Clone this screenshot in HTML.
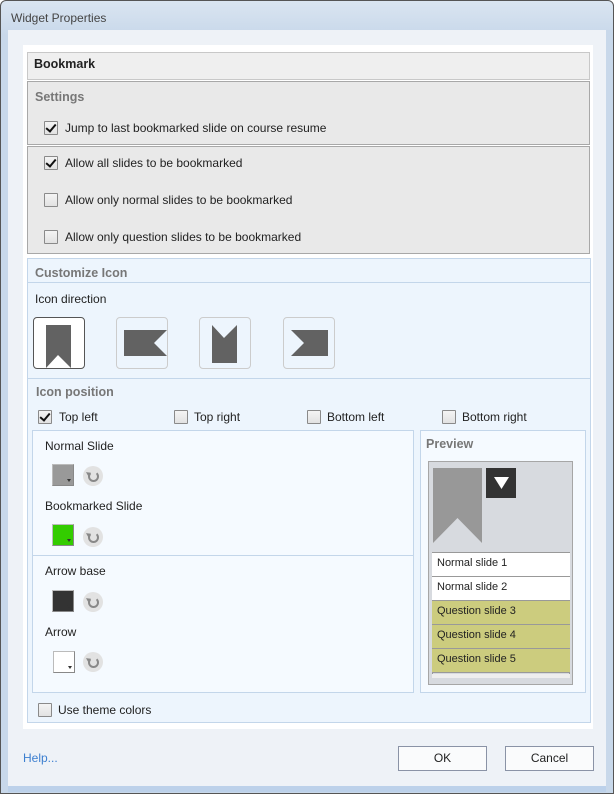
<!DOCTYPE html>
<html><head><style>
*{margin:0;padding:0;box-sizing:border-box}
body{width:614px;height:794px;position:relative;overflow:hidden;background:#fff;font-family:"Liberation Sans",sans-serif;font-size:12px;color:#222}
.a{position:absolute}
.cb{position:absolute;width:14px;height:14px;border:1px solid #8a8a8a;background:linear-gradient(#f4f4f4,#e2e2e2);border-radius:1px}
.cb.c::after{content:"";position:absolute;left:3px;top:0px;width:4px;height:8px;border:solid #111;border-width:0 2px 2px 0;transform:rotate(40deg)}
.t{position:absolute;white-space:nowrap}
.h{font-weight:bold;color:#777;font-size:12.5px}
.icb{position:absolute;width:52px;height:52px;border:1px solid #ccc;border-radius:4px;background:#edf5fd}
.sw{position:absolute;width:22px;height:22px;border:1px solid #bbb;border-right-color:#888;border-bottom-color:#888}
.sw::after{content:"";position:absolute;right:2px;bottom:1px;border:2px solid transparent;border-top:3px solid #333}
.rs{position:absolute;width:20px;height:20px;border-radius:50%;background:#e2e2e2}
.rs::before{content:"";position:absolute;left:5px;top:5px;width:7px;height:7px;border:2px solid #888;border-radius:50%;border-top-color:transparent}
.rs::after{content:"";position:absolute;left:4px;top:4px;border:3px solid transparent;border-left:4px solid #888;transform:rotate(-30deg)}
.pr{position:absolute;left:432px;width:138px;height:24px;border-bottom:1px solid #999;padding:4px 0 0 5px;font-size:11px}
.btn{position:absolute;width:89px;height:25px;border:1px solid #8a93a6;background:#fafbfc;text-align:center;line-height:23px}
</style></head><body>
<div class="a" style="left:0;top:0;width:614px;height:794px;border:1px solid #555;border-radius:6px 6px 0 0;background:linear-gradient(#dae5f1,#c8d8ea 35px)"></div>
<div class="t" style="left:11px;top:11px;color:#444">Widget Properties</div>
<div class="a" style="left:8px;top:30px;width:598px;height:758px;background:#eef2f7"></div>
<div class="a" style="left:606px;top:30px;width:6px;height:762px;background:#c8d8ea"></div>
<div class="a" style="left:8px;top:786px;width:598px;height:6px;background:#bcd1ea"></div>
<div class="a" style="left:23px;top:45px;width:570px;height:684px;background:#fff"></div>
<div class="a" style="left:27px;top:52px;width:563px;height:28px;background:#efefef;border:1px solid #c8c8c8"></div>
<div class="t" style="left:34px;top:57px;font-weight:bold;font-size:12.5px;color:#222">Bookmark</div>
<div class="a" style="left:27px;top:81px;width:563px;height:64px;background:#e9e9e9;border:1px solid #a8a8a8"></div>
<div class="t h" style="left:35px;top:90px">Settings</div>
<div class="cb c" style="left:44px;top:121px"></div><div class="t" style="left:65px;top:121px">Jump to last bookmarked slide on course resume</div>
<div class="a" style="left:27px;top:146px;width:563px;height:108px;background:#e9e9e9;border:1px solid #a8a8a8"></div>
<div class="cb c" style="left:44px;top:156px"></div><div class="t" style="left:65px;top:156px">Allow all slides to be bookmarked</div>
<div class="cb" style="left:44px;top:193px"></div><div class="t" style="left:65px;top:193px">Allow only normal slides to be bookmarked</div>
<div class="cb" style="left:44px;top:230px"></div><div class="t" style="left:65px;top:230px">Allow only question slides to be bookmarked</div>
<div class="a" style="left:27px;top:258px;width:564px;height:465px;background:#edf5fd;border:1px solid #c3d6ea"></div>
<div class="t h" style="left:35px;top:266px">Customize Icon</div>
<div class="a" style="left:28px;top:282px;width:562px;height:1px;background:#c3d6ea"></div>
<div class="t" style="left:35px;top:292px">Icon direction</div>
<div class="icb" style="left:33px;top:317px;border-color:#555;background:#fff"></div>
<svg class="a" style="left:33px;top:317px" width="52" height="52"><path d="M13 8H38V51L25 38 13 51Z" fill="#626262"/></svg>
<div class="icb" style="left:116px;top:317px"></div>
<svg class="a" style="left:116px;top:317px" width="52" height="52"><path d="M8 13H51L38 26 51 39H8Z" fill="#626262"/></svg>
<div class="icb" style="left:199px;top:317px"></div>
<svg class="a" style="left:199px;top:317px" width="52" height="52"><path d="M13 8 25 21 38 8V46H13Z" fill="#626262"/></svg>
<div class="icb" style="left:283px;top:317px"></div>
<svg class="a" style="left:283px;top:317px" width="52" height="52"><path d="M8 13H45V39H8L21 26Z" fill="#626262"/></svg>
<div class="a" style="left:28px;top:378px;width:562px;height:1px;background:#c3d6ea"></div>
<div class="t h" style="left:36px;top:385px">Icon position</div>
<div class="cb c" style="left:38px;top:410px"></div><div class="t" style="left:59px;top:410px">Top left</div>
<div class="cb" style="left:174px;top:410px"></div><div class="t" style="left:194px;top:410px">Top right</div>
<div class="cb" style="left:307px;top:410px"></div><div class="t" style="left:327px;top:410px">Bottom left</div>
<div class="cb" style="left:442px;top:410px"></div><div class="t" style="left:462px;top:410px">Bottom right</div>
<div class="a" style="left:32px;top:430px;width:382px;height:263px;background:#f5faff;border:1px solid #c3d6ea"></div>
<div class="a" style="left:33px;top:555px;width:380px;height:1px;background:#c3d6ea"></div>
<div class="t" style="left:45px;top:439px">Normal Slide</div>
<div class="sw" style="left:52px;top:464px;background:#999"></div><div class="rs" style="left:83px;top:466px"></div>
<div class="t" style="left:45px;top:499px">Bookmarked Slide</div>
<div class="sw" style="left:52px;top:524px;background:#33cc00"></div><div class="rs" style="left:83px;top:527px"></div>
<div class="t" style="left:45px;top:564px">Arrow base</div>
<div class="sw" style="left:52px;top:590px;background:#333"></div><div class="rs" style="left:83px;top:592px"></div>
<div class="t" style="left:45px;top:625px">Arrow</div>
<div class="sw" style="left:53px;top:651px;background:#fff"></div><div class="rs" style="left:83px;top:652px"></div>
<div class="a" style="left:420px;top:430px;width:166px;height:263px;background:#f5faff;border:1px solid #c3d6ea"></div>
<div class="t h" style="left:426px;top:437px">Preview</div>
<div class="a" style="left:428px;top:461px;width:145px;height:224px;background:#d7dadf;border:1px solid #a6a6a6"></div>
<svg class="a" style="left:433px;top:468px" width="90" height="80"><path d="M0 0H49V75L24.5 50 0 75Z" fill="#989898"/><rect x="53" y="0" width="30" height="30" fill="#333"/><path d="M61 9H76L68.5 21Z" fill="#fff"/></svg>
<div class="a" style="left:432px;top:552px;width:138px;height:122px;border:1px solid #999;border-bottom:none"></div>
<div class="pr" style="top:553px;background:#fff">Normal slide 1</div>
<div class="pr" style="top:577px;background:#fff">Normal slide 2</div>
<div class="pr" style="top:601px;background:#cccc7e">Question slide 3</div>
<div class="pr" style="top:625px;background:#cccc7e">Question slide 4</div>
<div class="pr" style="top:649px;background:#cccc7e">Question slide 5</div>
<div class="a" style="left:432px;top:674px;width:138px;height:4px;background:#eee"></div>
<div class="cb" style="left:38px;top:703px"></div><div class="t" style="left:58px;top:703px">Use theme colors</div>
<div class="t" style="left:23px;top:751px;color:#3c7fd0">Help...</div>
<div class="btn" style="left:398px;top:746px">OK</div>
<div class="btn" style="left:505px;top:746px">Cancel</div>
</body></html>
